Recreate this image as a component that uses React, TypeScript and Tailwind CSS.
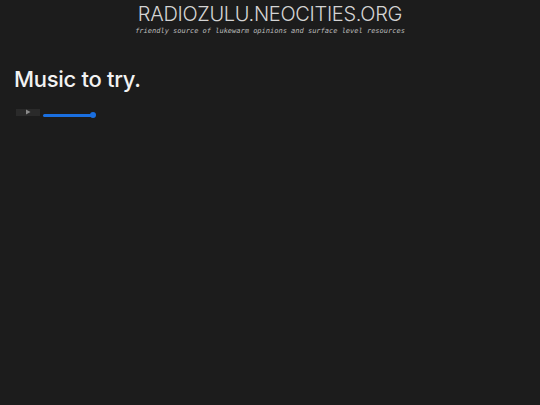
export default function App() {
  return (
    <div className="min-h-[405px] bg-[#1c1c1c] text-[#e8e8e8]">
      <header className="flex flex-col items-center pt-[2px]">
        <h1 className="font-['Inter',sans-serif] text-[20px] font-light leading-[24px] tracking-[-0.3px] text-[#d4d4d4]">
          RADIOZULU.NEOCITIES.ORG
        </h1>
        <p className="font-['DejaVu_Sans_Mono',monospace] text-[7px] italic leading-[10px] text-[#bdbdbd]">
          friendly source of lukewarm opinions and surface level resources
        </p>
      </header>
      <main className="px-[14px] pt-[29px]">
        <h2 className="font-['Inter',sans-serif] text-[22px] font-medium leading-[28px] tracking-[-0.3px] text-[#f2f2f2]">
          Music to try.
        </h2>
        <div className="mt-[14px] flex items-center gap-[3px] pl-[2px]">
          <div className="flex h-[7px] w-[24px] items-center justify-center bg-[#2a2a2a]">
            <svg width="6" height="6" viewBox="0 0 6 6">
              <path d="M1 0.5 L5.5 3 L1 5.5 Z" fill="#8a8a8a" />
            </svg>
          </div>
          <div className="relative mt-[6px] flex h-[4px] w-[51px] items-center">
            <div className="h-[3px] w-full rounded-full bg-[#1a6fe0]" />
            <div className="absolute right-[-2px] h-[6px] w-[6px] rounded-full bg-[#1a6fe0]" />
          </div>
        </div>
      </main>
    </div>
  );
}
